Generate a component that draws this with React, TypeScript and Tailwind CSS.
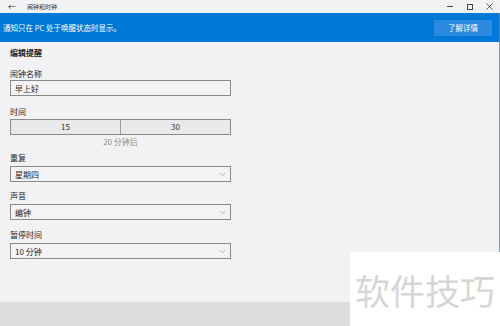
import { ChevronDown } from "lucide-react";

const font = { fontFamily: '"Noto Sans CJK SC", "Noto Sans", sans-serif' };

function Label({ text, className = "" }: { text: string; className?: string }) {
  return <div className={`text-[8px] leading-[11px] text-[#1f1f1f] ${className}`}>{text}</div>;
}

function Dropdown({ value, className = "" }: { value: string; className?: string }) {
  return (
    <div
      className={`flex h-[16px] w-[221px] items-center justify-between border border-[#8a8a8a] bg-[#f3f2f5] pl-[4px] pr-[3px] ${className}`}
    >
      <span className="text-[8px] leading-[11px] text-[#1f1f1f]">{value}</span>
      <ChevronDown size={9} strokeWidth={1.5} className="text-[#7a7a7a]" />
    </div>
  );
}

export default function App() {
  return (
    <div
      style={font}
      className="relative flex h-[326px] w-[500px] flex-col overflow-hidden bg-[#f2f1f4]"
    >
      {/* title bar */}
      <div className="flex h-[13px] items-center bg-[#f2f1f4] text-[#333]">
        <span className="ml-[8px] text-[8px] leading-none">←</span>
        <span className="ml-[11px] text-[6px] leading-none">闹钟和时钟</span>
        <div className="ml-auto flex items-center">
          <div className="flex w-[20px] justify-center">
            <div className="h-[1px] w-[6px] bg-[#444]" />
          </div>
          <div className="flex w-[20px] justify-center">
            <div className="h-[6px] w-[6px] border border-[#444]" />
          </div>
          <div className="flex w-[20px] justify-center pr-[2px]">
            <svg width="7" height="7" viewBox="0 0 7 7">
              <path d="M0.5 0.5 L6.5 6.5 M6.5 0.5 L0.5 6.5" stroke="#444" strokeWidth="0.9" />
            </svg>
          </div>
        </div>
      </div>

      {/* notice bar */}
      <div className="flex h-[29px] items-center justify-between border-r border-[#5f7f99] bg-[#0078d7] pl-[3px] pr-[7px]">
        <span className="text-[7.5px] leading-none text-white">通知只在 PC 处于唤醒状态时显示。</span>
        <div className="flex h-[16px] w-[58px] items-center justify-center bg-[#2b8ae0] text-[7.5px] text-white">
          了解详情
        </div>
      </div>

      {/* form */}
      <div className="flex flex-1 flex-col border-r border-[#8d9aa3] pl-[10px]">
        <Label text="编辑提醒" className="mt-[5px] font-bold" />

        <Label text="闹钟名称" className="mt-[10px]" />
        <div className="mt-[1px] flex h-[16px] w-[221px] items-center border border-[#8a8a8a] bg-[#f4f3f6] pl-[4px]">
          <span className="text-[8px] leading-[11px] text-[#1f1f1f]">早上好</span>
        </div>

        <Label text="时间" className="mt-[10px]" />
        <div className="mt-[2px] flex h-[16px] w-[221px] border border-[#8a8a8a] bg-[#e9e8eb]">
          <div className="flex flex-1 items-center justify-center border-r border-[#9a9a9a] text-[8px] text-[#333]">
            15
          </div>
          <div className="flex flex-1 items-center justify-center text-[8px] text-[#333]">30</div>
        </div>
        <div className="mt-[1px] w-[221px] text-center text-[8px] leading-[11px] text-[#8a8a8a]">
          20 分钟后
        </div>

        <Label text="重复" className="mt-[5px]" />
        <Dropdown value="星期四" className="mt-[3px]" />

        <Label text="声音" className="mt-[8px]" />
        <Dropdown value="编钟" className="mt-[3px]" />

        <Label text="暂停时间" className="mt-[9px]" />
        <Dropdown value="10 分钟" className="mt-[3px]" />
      </div>

      {/* bottom band */}
      <div className="h-[24px] bg-[#dcdbde]" />

      {/* watermark */}
      <div className="absolute bottom-0 right-0 flex h-[74px] w-[150px] items-center justify-center bg-white">
        <span className="text-[35px] leading-none tracking-[0px] text-[#d6d6d6]">软件技巧</span>
      </div>
    </div>
  );
}
